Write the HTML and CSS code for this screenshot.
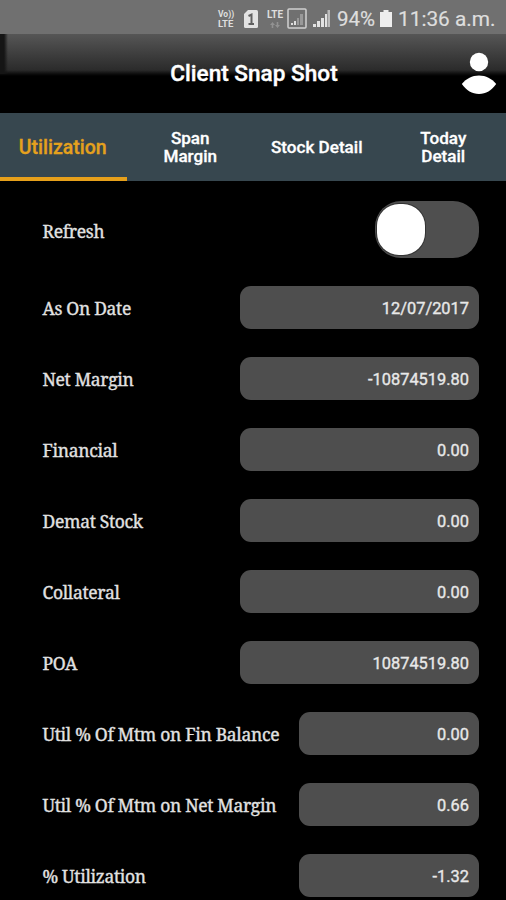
FILE: index.html
```html
<!DOCTYPE html>
<html lang="en">
<head>
<meta charset="utf-8">
<title>Client Snap Shot</title>
<link rel="stylesheet" href="styles.css">
</head>
<body>
<div class="status">
  <div class="volte"><span>Vo))</span><span>LTE</span></div>
  <svg class="sim" width="14" height="18" viewBox="0 0 14 18"><path d="M4 0H12.500Q14 0 14 1.500V16.500Q14 18 12.500 18H1.500Q0 18 0 16.500V4Z" fill="#e2e2e2"/><path d="M4.500 6L7.500 4.500V14M4.500 14H10" fill="none" stroke="#606060" stroke-width="2"/></svg>
  <div class="lte"><span>LTE</span><svg width="10" height="6" viewBox="0 0 10 6"><path d="M2.500 0L5 3H3.300V6H1.700V3H0ZM7.500 6L5 3H6.700V0H8.300V3H10Z" fill="#929292"/></svg></div>
  <svg class="boxed" width="20" height="21" viewBox="0 0 20 21"><rect x="1" y="1" width="18" height="19" rx="1" fill="none" stroke="#cfcfcf" stroke-width="1.500"/><path d="M4 15h2v2H4zM7 13h2v4H7z" fill="#ddd"/><path d="M10 10h2v7h-2zM13 6h3v11h-3z" fill="#999"/></svg>
  <svg class="signal" width="18" height="17" viewBox="0 0 18 17"><path d="M0 14h3v3H0zM4 11h3v6H4zM8 8h3v9H8zM12 4h2v13h-2z" fill="#e2e2e2"/><path d="M14.500 0h2.500v17h-2.500z" fill="#bbb"/></svg>
  <span class="pct">94%</span>
  <svg class="battery" width="12" height="17" viewBox="0 0 12 17"><path d="M3.500 0h5v2H12v15H0V2h3.500z" fill="#eee"/></svg>
  <span class="time">11:36 a.m.</span>
</div>
<header class="header">
  <h1>Client Snap Shot</h1>
  <svg class="user" width="36" height="43" viewBox="0 0 36 43"><circle cx="18" cy="10" r="9.200" fill="#fff"/><path d="M.8 32C5.500 26.500 11 23.500 18 23.500S30.500 26.500 35.200 32C30.500 38.500 25 42 18 42S5.500 38.500.8 32Z" fill="#fff"/></svg>
</header>
<nav class="tabs">
  <div class="tab active">Utilization</div>
  <div class="tab double">Span<br>Margin</div>
  <div class="tab">Stock Detail</div>
  <div class="tab double">Today<br>Detail</div>
</nav>
<main class="rows">
  <div class="row refresh"><span class="label">Refresh</span><div class="toggle"><div class="knob"></div></div></div>
  <div class="row"><span class="label">As On Date</span><div class="value">12/07/2017</div></div>
  <div class="row"><span class="label">Net Margin</span><div class="value">-10874519.80</div></div>
  <div class="row"><span class="label">Financial</span><div class="value">0.00</div></div>
  <div class="row"><span class="label">Demat Stock</span><div class="value">0.00</div></div>
  <div class="row"><span class="label">Collateral</span><div class="value">0.00</div></div>
  <div class="row"><span class="label">POA</span><div class="value">10874519.80</div></div>
  <div class="row"><span class="label">Util % Of Mtm on Fin Balance</span><div class="value short">0.00</div></div>
  <div class="row"><span class="label">Util % Of Mtm on Net Margin</span><div class="value short">0.66</div></div>
  <div class="row"><span class="label">% Utilization</span><div class="value short">-1.32</div></div>
</main>
</body>
</html>
```
FILE: styles.css
```css
* { box-sizing: border-box; }
html, body { margin: 0; height: 900px; overflow: hidden; background: #000; }
body { font-family: Roboto, sans-serif; color: #fff; }
.status { height: 34px; background: #707070; display: flex; align-items: center; justify-content: flex-end; padding: 3px 9px 0 0; color: #dedede; }
.status svg { display: block; flex: none; }
.volte { width: 18px; display: flex; flex-direction: column; font-size: 9px; line-height: 9px; font-weight: 700; margin-right: 8px; }
.volte span:first-child { font-size: 8.500px; }
.volte span:last-child { font-size: 9.500px; }
.lte { width: 18px; height: 18px; display: flex; flex-direction: column; align-items: center; gap: 2px; font-size: 10px; line-height: 10px; font-weight: 700; margin: 0 3px 0 8px; }
.signal { margin-left: 6px; }
.pct { font-size: 20.500px; margin-left: 6px; width: 39px; white-space: nowrap; }
.battery { margin-left: 4px; }
.time { font-size: 20.800px; width: 98px; margin-left: 6px; white-space: nowrap; margin-right: 1px; }
.pct, .time { -webkit-text-stroke: .2px #dedede; }
.header { height: 79px; display: grid; grid-template-columns: 1fr; align-items: center; position: relative; background: linear-gradient(#565656, #2b2b2b 36px, #0c0c0c 40px, #000 42px); }
.header::before { content: ""; position: absolute; left: 0; top: 0; width: 8px; height: 40px; background: linear-gradient(90deg, #151515 50%, transparent); }
.header h1 { position: relative; margin: 1px 0 0 2px; text-align: center; font-size: 22.600px; line-height: 28px; font-weight: 500; -webkit-text-stroke: .4px #fff; }
.user { position: absolute; right: 9.500px; top: 18px; }
.tabs { height: 68px; background: #37474f; display: grid; grid-template-columns: repeat(4, 1fr); }
.tab { display: flex; align-items: center; justify-content: center; text-align: center; font-size: 17.100px; line-height: 18.500px; font-weight: 500; padding: 1px 0 0 1px; -webkit-text-stroke: .3px #fff; }
.tab.double { padding-top: 0; }
.tab.active { font-size: 19.500px; color: #e5a11d; border-bottom: 4px solid #e6a01b; padding: 6px 1px 0 0; -webkit-text-stroke-color: #e5a11d; }
.rows { padding: 0 27.500px 0 42px; }
.row { height: 71px; display: flex; align-items: center; justify-content: space-between; }
.row.refresh { height: 91px; padding-top: 8px; align-items: flex-start; }
.row.refresh .label { margin-top: 29px; }
.label { font-family: "Noto Serif", "Droid Serif", "DejaVu Serif Condensed", "DejaVu Serif", serif; font-size: 17.500px; letter-spacing: -.32px; line-height: 24px; white-space: nowrap; color: #e2e2e2; -webkit-text-stroke: .35px #e2e2e2; padding: 1px 0 0 .5px; }
.toggle { width: 104px; height: 57px; margin-top: 12px; border-radius: 26px; background: #4f4f4f; padding: 3px 2px; }
.knob { width: 48px; height: 51px; border-radius: 22px; background: #fff; box-shadow: 0 0 0 1px #333; }
.value { width: 238.500px; height: 43px; border-radius: 11px; background: #4e4e4e; color: #e8e8e8; font-size: 16.400px; line-height: 45px; text-align: right; padding-right: 9.500px; -webkit-text-stroke: .35px #e8e8e8; }
.value.short { width: 180px; }
```
